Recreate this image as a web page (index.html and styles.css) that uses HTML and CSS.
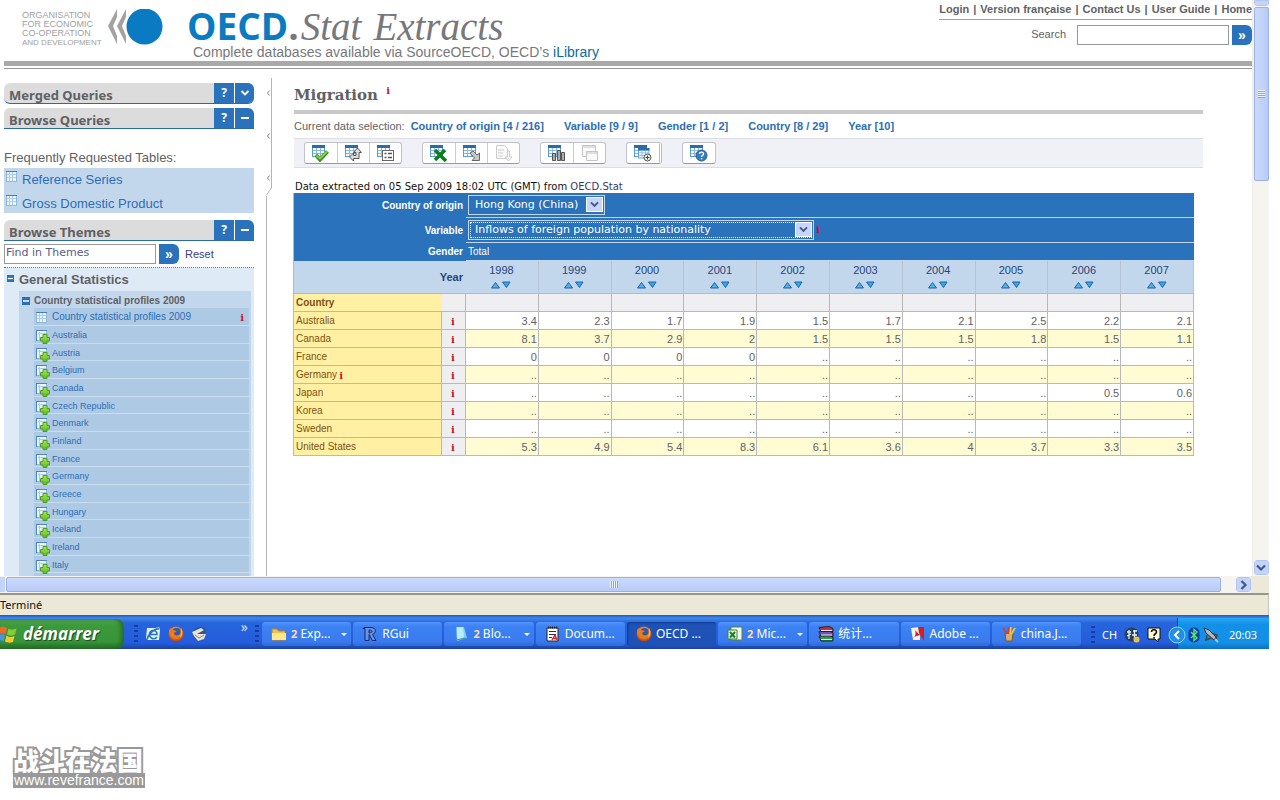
FILE: index.html
```html
<!DOCTYPE html>
<html lang="en">
<head>
<meta charset="utf-8">
<title>OECD.Stat Extracts - Migration</title>
<link rel="stylesheet" href="styles.css">
</head>
<body>
<svg class="defs" aria-hidden="true">
  <defs>
    <linearGradient id="gGreen" x1="0" y1="0" x2="0" y2="1"><stop offset="0" stop-color="#a6e84a"/><stop offset="1" stop-color="#5fb92c"/></linearGradient>
    <radialGradient id="gFox" cx=".5" cy=".4" r=".6"><stop offset="0" stop-color="#ffd24a"/><stop offset=".6" stop-color="#f07c1c"/><stop offset="1" stop-color="#b63c10"/></radialGradient>
    <symbol id="grid" viewBox="0 0 12 12"><rect x=".5" y=".5" width="10" height="10" fill="#e9f4fc" stroke="#8fb6dc"/><path d="M1 3.5h9M1 6.5h9M3.5 1v9M6.5 1v9" stroke="#a9cdea"/><path d="M0 .5h11" stroke="#3f7fbf"/></symbol>
    <symbol id="add" viewBox="0 0 14 14"><rect x=".5" y=".5" width="10" height="10" fill="#e9f4fc" stroke="#8fb6dc"/><path d="M0 .5h11M.5 0v11" stroke="#4a86c2"/><path d="M2 3.500h8M3.500 2v8" stroke="#a9cdea"/><path d="M7 4.500h4v3h2.500v3.500H11v2.500H7V11H4.500V7.500H7z" fill="url(#gGreen)" stroke="#4c9c28"/></symbol>
    <symbol id="minus" viewBox="0 0 8 8"><rect width="8" height="8" fill="#2a72b5"/><path d="M1 4h6" stroke="#fff" stroke-width="1.500"/></symbol>
    <symbol id="sort" viewBox="0 0 20 8"><path d="M4.500 1.500L8.500 7H.5z" fill="#4ab4f0" stroke="#2a5f98"/><path d="M11.500 1h7.500l-3.500 5.500z" fill="#39a6ea" stroke="#1766b4"/></symbol>
    <symbol id="sheet" viewBox="0 0 16 16"><rect x=".5" y=".5" width="12" height="11" fill="#f5fafe" stroke="#5c9bd0"/><path d="M0 1.500h13" stroke="#2a6ca8" stroke-width="3"/><path d="M1 5.500h11M1 8.500h11M4.500 3v8M8.500 3v8" stroke="#8cb8de"/></symbol>
    <symbol id="down" viewBox="0 0 10 8"><path d="M1 1.500l4 4 4-4" fill="none" stroke="#42578c" stroke-width="2.200"/></symbol>
    <symbol id="firefox" viewBox="0 0 16 16"><circle cx="8" cy="8" r="7.500" fill="url(#gFox)"/><circle cx="8.500" cy="6" r="4" fill="#2e5aa6"/><path d="M1 4l2-2 2 2 4 1-3 2 1 2c2 1 4 0 5-1 0 3-3 4-5 4-4 0-6-4-6-8z" fill="#ee7a1c"/><path d="M13 2c2 3 2 8-1 10l1-5z" fill="#ffb52e"/></symbol>
  </defs>
</svg>

<div class="screen">
  <div class="viewport">
    <div class="page">
      <header class="masthead">
        <div class="org">
          <p>ORGANISATION<br>FOR ECONOMIC<br>CO-OPERATION</p>
          <p class="org-last">AND DEVELOPMENT</p>
        </div>
        <svg class="globe" width="56" height="36" viewBox="0 0 56 36"><path d="M9 0L0 17l9 18V27L5 17l4-9zM18 0L9 17l9 18V27l-4-10 4-9z" fill="#a2a2a2"/><circle cx="36.500" cy="17.500" r="18" fill="#0a7bc2"/></svg>
        <div class="brand">
          <div class="wordmark"><span class="oecd">OECD</span><span class="dot">.</span><span class="stat">Stat</span><span class="extracts">Extracts</span></div>
          <div class="tagline">Complete databases available via SourceOECD, OECD’s <a href="#">iLibrary</a></div>
        </div>
        <div class="tools">
          <nav class="topnav"><a href="#">Login</a><span>|</span><a href="#">Version française</a><span>|</span><a href="#">Contact Us</a><span>|</span><a href="#">User Guide</a><span>|</span><a href="#">Home</a></nav>
          <form class="search"><label for="q">Search</label><input id="q" type="text"><button type="button" class="go">»</button></form>
        </div>
      </header>

      <div class="columns">
        <aside class="sidebar">
          <section class="bar round-bottom"><h2>Merged Queries</h2><button type="button">?</button><button type="button" aria-label="Expand"><svg width="10" height="8" viewBox="0 0 10 8"><path d="M1.500 2l3.500 3.500L8.500 2" fill="none" stroke="#fff" stroke-width="1.800"/></svg></button></section>
          <section class="bar"><h2>Browse Queries</h2><button type="button">?</button><button type="button" aria-label="Collapse"><svg width="8" height="8" viewBox="0 0 8 8"><path d="M0 4h8" stroke="#fff" stroke-width="2"/></svg></button></section>
          <p class="frequent">Frequently Requested Tables:</p>
          <ul class="requested">
            <li><svg width="12" height="12"><use href="#grid"/></svg><a href="#">Reference Series</a></li>
            <li><svg width="12" height="12"><use href="#grid"/></svg><a href="#">Gross Domestic Product</a></li>
          </ul>
          <section class="bar"><h2>Browse Themes</h2><button type="button">?</button><button type="button" aria-label="Collapse"><svg width="8" height="8" viewBox="0 0 8 8"><path d="M0 4h8" stroke="#fff" stroke-width="2"/></svg></button></section>
          <form class="find"><input type="text" value="Find in Themes" aria-label="Find in Themes"><button type="button" class="go">»</button><a href="#">Reset</a></form>
          <div class="tree">
            <h3><svg width="7" height="7"><use href="#minus"/></svg>General Statistics</h3>
            <div class="branch">
              <h4><svg width="8" height="8"><use href="#minus"/></svg>Country statistical profiles 2009</h4>
              <ul class="leaves">
                <li class="lead"><svg width="12" height="12"><use href="#grid"/></svg><a href="#">Country statistical profiles 2009</a><b class="info">i</b></li>
                <li><svg width="14" height="14"><use href="#add"/></svg><a href="#">Australia</a></li>
                <li><svg width="14" height="14"><use href="#add"/></svg><a href="#">Austria</a></li>
                <li><svg width="14" height="14"><use href="#add"/></svg><a href="#">Belgium</a></li>
                <li><svg width="14" height="14"><use href="#add"/></svg><a href="#">Canada</a></li>
                <li><svg width="14" height="14"><use href="#add"/></svg><a href="#">Czech Republic</a></li>
                <li><svg width="14" height="14"><use href="#add"/></svg><a href="#">Denmark</a></li>
                <li><svg width="14" height="14"><use href="#add"/></svg><a href="#">Finland</a></li>
                <li><svg width="14" height="14"><use href="#add"/></svg><a href="#">France</a></li>
                <li><svg width="14" height="14"><use href="#add"/></svg><a href="#">Germany</a></li>
                <li><svg width="14" height="14"><use href="#add"/></svg><a href="#">Greece</a></li>
                <li><svg width="14" height="14"><use href="#add"/></svg><a href="#">Hungary</a></li>
                <li><svg width="14" height="14"><use href="#add"/></svg><a href="#">Iceland</a></li>
                <li><svg width="14" height="14"><use href="#add"/></svg><a href="#">Ireland</a></li>
                <li><svg width="14" height="14"><use href="#add"/></svg><a href="#">Italy</a></li>
                <li></li>
              </ul>
            </div>
          </div>
        </aside>

        <div class="splitter">
          <svg width="6" height="118" viewBox="0 0 6 118"><path d="M5.500 0v110L.5 117" fill="none" stroke="#b4b4b4"/><path d="M3.500 12.500L1.500 15l2 2.500M3.500 55.500L1.500 58l2 2.500M3.500 97.500L1.500 100l2 2.500" fill="none" stroke="#888"/></svg>
        </div>

        <main class="content">
          <h1>Migration <b class="info">i</b></h1>
          <div class="selection"><span>Current data selection:</span><a href="#">Country of origin [4 / 216]</a><a href="#">Variable [9 / 9]</a><a href="#">Gender [1 / 2]</a><a href="#">Country [8 / 29]</a><a href="#">Year [10]</a></div>
          <div class="toolbar">
            <div class="group">
              <button type="button" aria-label="Select"><svg width="18" height="17" viewBox="0 0 18 17"><use href="#sheet" width="16" height="16"/><path d="M4 10l4 4.500 7.500-8" fill="none" stroke="#3c8a22" stroke-width="4"/><path d="M4.500 10.500l3.500 3 7-7" fill="none" stroke="#8ad04e" stroke-width="2"/></svg></button>
              <button type="button" aria-label="Layout"><svg width="18" height="17" viewBox="0 0 18 17"><use href="#sheet" width="16" height="16"/><path d="M12.500 3l4 4.500h-2.500v6H8.500v2.500l-4-4 4-4v2.500h2.500v-3H8.500z" fill="#ddd" stroke="#555"/></svg></button>
              <button type="button" aria-label="Options"><svg width="18" height="17" viewBox="0 0 18 17"><use href="#sheet" width="16" height="16"/><rect x="5.500" y="5.500" width="11" height="10" fill="#fff" stroke="#666"/><path d="M7.500 8.500h2m1.500 0h4M7.500 12.500h2m1.500 0h4" stroke="#555" stroke-width="1.500"/></svg></button>
            </div>
            <div class="group">
              <button type="button" aria-label="Excel"><svg width="18" height="17" viewBox="0 0 18 17"><use href="#sheet" width="16" height="16"/><path d="M5 5l11 11M15 5L5 15" stroke="#0c7d1c" stroke-width="3.500"/></svg></button>
              <button type="button" aria-label="Export"><svg width="18" height="17" viewBox="0 0 18 17"><use href="#sheet" width="16" height="16"/><path d="M7 8l3-2 4 4 2.500-2v7.500H9l2.500-2.500z" fill="#c8c8c8" stroke="#666"/></svg></button>
              <button type="button" aria-label="Download" disabled><svg width="18" height="17" viewBox="0 0 18 17" fill="#fafafa" stroke="#ccc"><path d="M1.500.5h8l3 3v10h-11zM3 5h6M3 8h5M3 11h5"/><path d="M12.500 6h2v6h2.500l-3.500 4-3.500-4h2.500z"/></svg></button>
            </div>
            <div class="group">
              <button type="button" aria-label="Chart"><svg width="18" height="17" viewBox="0 0 18 17"><use href="#sheet" width="16" height="16"/><path d="M4.500 8.500h3v7h-3zM9.500 5.500h3v10h-3zM13.500 7.500h3v8h-3z" fill="#aaa" stroke="#555"/></svg></button>
              <button type="button" aria-label="Windows" disabled><svg width="18" height="17" viewBox="0 0 18 17" fill="#fafafa" stroke="#c4c4c4"><path d="M1.500.5h13v11h-13zM1 2h14"/><path d="M5.500 6.500h11v9h-11zM5 8h12"/></svg></button>
            </div>
            <div class="group doubled">
              <button type="button" aria-label="Add query"><svg width="18" height="17" viewBox="0 0 18 17"><use href="#sheet" width="16" height="16"/><use href="#sheet" x="4" y="3" width="14" height="14"/><circle cx="13.500" cy="12.500" r="3.500" fill="#eee" stroke="#555"/><path d="M11.500 12.500h4M13.500 10.500v4" stroke="#444"/></svg></button>
            </div>
            <div class="group">
              <button type="button" aria-label="Help"><svg width="18" height="17" viewBox="0 0 18 17"><use href="#sheet" width="16" height="16"/><circle cx="11.500" cy="10.500" r="5.500" fill="#2f7fc4" stroke="#35597c"/><path d="M9.500 9c0-2.500 4-2.500 4 0 0 1.500-2 1.200-2 3" fill="none" stroke="#fff" stroke-width="1.300"/><circle cx="11.500" cy="13.800" r=".8" fill="#fff"/></svg></button>
            </div>
          </div>
          <p class="extracted">Data extracted on 05 Sep 2009 18:02 UTC (GMT) from <a href="#">OECD.Stat</a></p>

          <table class="data">
            <colgroup><col class="c-name"><col class="c-info"><col span="10"></colgroup>
            <thead>
              <tr class="dim tall"><th colspan="2"><label for="origin">Country of origin</label></th><td colspan="10"><span class="pick short"><select id="origin"><option>Hong Kong (China)</option></select><svg width="10" height="8"><use href="#down"/></svg></span></td></tr>
              <tr class="dim tall"><th colspan="2"><label for="variable">Variable</label></th><td colspan="10"><span class="pick long"><select id="variable"><option>Inflows of foreign population by nationality</option></select><svg width="10" height="8"><use href="#down"/></svg></span><b class="info dark">i</b></td></tr>
              <tr class="dim"><th colspan="2">Gender</th><td colspan="10">Total</td></tr>
              <tr class="years"><th colspan="2" class="ylabel">Year</th>
                <th>1998<svg width="20" height="8"><use href="#sort"/></svg></th><th>1999<svg width="20" height="8"><use href="#sort"/></svg></th><th>2000<svg width="20" height="8"><use href="#sort"/></svg></th><th>2001<svg width="20" height="8"><use href="#sort"/></svg></th><th>2002<svg width="20" height="8"><use href="#sort"/></svg></th><th>2003<svg width="20" height="8"><use href="#sort"/></svg></th><th>2004<svg width="20" height="8"><use href="#sort"/></svg></th><th>2005<svg width="20" height="8"><use href="#sort"/></svg></th><th>2006<svg width="20" height="8"><use href="#sort"/></svg></th><th>2007<svg width="20" height="8"><use href="#sort"/></svg></th></tr>
            </thead>
            <tbody>
              <tr class="head"><th colspan="2"><span>Country</span></th><td></td><td></td><td></td><td></td><td></td><td></td><td></td><td></td><td></td><td></td></tr>
              <tr><th>Australia</th><td><b class="info">i</b></td><td>3.4</td><td>2.3</td><td>1.7</td><td>1.9</td><td>1.5</td><td>1.7</td><td>2.1</td><td>2.5</td><td>2.2</td><td>2.1</td></tr>
              <tr><th>Canada</th><td><b class="info">i</b></td><td>8.1</td><td>3.7</td><td>2.9</td><td>2</td><td>1.5</td><td>1.5</td><td>1.5</td><td>1.8</td><td>1.5</td><td>1.1</td></tr>
              <tr><th>France</th><td><b class="info">i</b></td><td>0</td><td>0</td><td>0</td><td>0</td><td>..</td><td>..</td><td>..</td><td>..</td><td>..</td><td>..</td></tr>
              <tr><th>Germany<b class="info">i</b></th><td><b class="info">i</b></td><td>..</td><td>..</td><td>..</td><td>..</td><td>..</td><td>..</td><td>..</td><td>..</td><td>..</td><td>..</td></tr>
              <tr><th>Japan</th><td><b class="info">i</b></td><td>..</td><td>..</td><td>..</td><td>..</td><td>..</td><td>..</td><td>..</td><td>..</td><td>0.5</td><td>0.6</td></tr>
              <tr><th>Korea</th><td><b class="info">i</b></td><td>..</td><td>..</td><td>..</td><td>..</td><td>..</td><td>..</td><td>..</td><td>..</td><td>..</td><td>..</td></tr>
              <tr><th>Sweden</th><td><b class="info">i</b></td><td>..</td><td>..</td><td>..</td><td>..</td><td>..</td><td>..</td><td>..</td><td>..</td><td>..</td><td>..</td></tr>
              <tr><th>United States</th><td><b class="info">i</b></td><td>5.3</td><td>4.9</td><td>5.4</td><td>8.3</td><td>6.1</td><td>3.6</td><td>4</td><td>3.7</td><td>3.3</td><td>3.5</td></tr>
            </tbody>
          </table>
        </main>
      </div>
    </div>
    <div class="vscroll">
      <div class="arrow stub"></div>
      <div class="vthumb"><i class="grip"></i></div>
      <div class="arrow"><svg width="10" height="8"><use href="#down"/></svg></div>
    </div>
  </div>

  <div class="hscroll">
    <div class="stub"></div>
    <div class="hthumb"><i class="grip"></i></div>
    <div class="arrow"><svg width="8" height="10" viewBox="0 0 8 10"><path d="M1.500 1l4 4-4 4" fill="none" stroke="#42578c" stroke-width="2.200"/></svg></div>
    <div class="corner"></div>
  </div>
  <div class="status"><span>Terminé</span></div>

  <footer class="taskbar">
    <button type="button" class="start"><svg width="18" height="18" viewBox="0 0 18 18"><path d="M-1 3c3-2 5-1 8 0L5.500 9c-3-1-5-1-8 1z" fill="#ee6a2c"/><path d="M8.500 3.500c3 2 5 1 8 0L15 9.500c-3 1.500-5 1.500-8 0z" fill="#86cc3a"/><path d="M-2 11c3-2 4-2 7-1L3.500 16C1 15 0 15-3 16z" fill="#4e90ea"/><path d="M6.500 10.500c3 2 5 2 8 .5L13 17c-3 1-5 1-8-.5z" fill="#fac62c"/></svg>démarrer</button>
    <div class="quick">
      <i class="dots"></i>
      <svg width="16" height="16" viewBox="0 0 16 16"><path d="M2 2h9l3-1 1 3-1 10H3L1 12z" fill="#e4f2fc"/><path d="M12 11c-2 3-7 2-7.500-2S9 3 11 5.500c1 1 1 2 1 3H4.500M3 13c-2-2 6-11 11-10" fill="none" stroke="#2677b8" stroke-width="1.600"/></svg>
      <svg width="16" height="16"><use href="#firefox"/></svg>
      <svg width="16" height="16" viewBox="0 0 16 16"><path d="M1 7c1-6 10-8 14-4l-2 10-7 2z" fill="#2f568c"/><path d="M1 6l9-4 3 2-7 4h9l-2 5-6 2-4-5z" fill="#e6e2dc"/><path d="M4 9l4 3 5-3" stroke="#a88450" fill="none"/></svg>
      <span class="more">»</span>
      <i class="dots"></i>
    </div>
    <div class="tasks">
      <button type="button"><svg width="16" height="16" viewBox="0 0 16 16"><path d="M1 3h5l1.500 2H14v9H1z" fill="#f0c050" stroke="#b98a20"/><path d="M1 7h14v7H1z" fill="#ffe68a"/></svg><span><b>2</b> Exp...</span><i class="caret"></i></button>
      <button type="button"><svg width="16" height="16" viewBox="0 0 16 16"><path d="M2 1.500h7c6 0 5 6 1.500 7l3.500 6h-3.500l-3.500-6v6H3v-12H1zM7 4v3c4 0 4-3 0-3z" fill="#6b93df" stroke="#12286c"/></svg><span>RGui</span></button>
      <button type="button"><svg width="16" height="16" viewBox="0 0 16 16"><path d="M3 1h8l3 11-10 3z" fill="#7ed0ea"/><path d="M3 1h7l1 10-7 3z" fill="#b8ecf8"/><path d="M3 1v13l10-2" fill="none" stroke="#438ec0"/></svg><span><b>2</b> Blo...</span><i class="caret"></i></button>
      <button type="button"><svg width="16" height="16" viewBox="0 0 16 16"><path d="M2 2h11v13H2z" fill="#fff" stroke="#222"/><path d="M4 5.500h7M4 8.500h7M4 11.500h3" stroke="#235"/><path d="M3 1.500h9" stroke="#222" stroke-width="2" stroke-dasharray="1 1"/><path d="M7 14l3-5 2 5M8 12.500h3" fill="none" stroke="#d02020" stroke-width="1.300"/></svg><span>Docum...</span></button>
      <button type="button" class="active"><svg width="16" height="16"><use href="#firefox"/></svg><span>OECD ...</span></button>
      <button type="button"><svg width="16" height="16" viewBox="0 0 16 16"><path d="M4 1h11v13H4z" fill="#f2f8ee" stroke="#4a8a3a"/><path d="M1 4h9v9H1z" fill="#e5f2df" stroke="#3a8a32"/><path d="M3 6l5 5.500M8 6l-5 5.500" stroke="#1f7f24" stroke-width="2"/></svg><span><b>2</b> Mic...</span><i class="caret"></i></button>
      <button type="button"><svg width="16" height="16" viewBox="0 0 16 16"><path d="M1 1.500l10-1 4 2v3H3z" fill="#c83040" stroke="#222"/><path d="M1 5.500h11l3 1v4H3z" fill="#7b4cc0" stroke="#222"/><path d="M1 10h11l3 1v4H3z" fill="#2d9b50" stroke="#222"/><path d="M3 4.500h11M3 9h11M3 13.500h11" stroke="#eee"/></svg><span>统计...</span></button>
      <button type="button"><svg width="16" height="16" viewBox="0 0 16 16"><path d="M1 2l9-1v13H3z" fill="#f6f2ee"/><path d="M8 1h6v14l-5-8z" fill="#d81c1c"/><path d="M2 13c4-2 4-6 3-9 3 4 5 5 7 5-4 0-7 1-10 4z" fill="#d81c1c"/></svg><span>Adobe ...</span></button>
      <button type="button"><svg width="16" height="16" viewBox="0 0 16 16"><path d="M4 7h8l-1 8H5z" fill="#d6b070" stroke="#7a5a2c"/><path d="M6 8L2 2M7.500 8V1" stroke="#cf4030" stroke-width="1.800"/><path d="M9 8l1-7M10.500 8L14 2" stroke="#e8c840" stroke-width="1.800"/></svg><span>china.J...</span></button>
    </div>
    <div class="lang">
      <i class="dots"></i><span>CH</span>
      <svg width="16" height="16" viewBox="0 0 16 16"><circle cx="7.500" cy="7.500" r="7" fill="#24405e"/><path d="M3 5h4M5 3v9M3 9l4-2M9 4h4M8 8h5M10.500 3v9" stroke="#e6eef6" stroke-width="1.300"/><circle cx="12.500" cy="12.500" r="3" fill="#e9c04a"/></svg>
      <svg width="14" height="16" viewBox="0 0 14 16"><path d="M1 1h12v11h-2v3l-3-3H1z" fill="#fffbd8" stroke="#111"/><path d="M4.500 5c0-3 5-3 5 0 0 2-2.500 1.500-2.500 4M7 10v1.500" fill="none" stroke="#111" stroke-width="1.600"/></svg>
    </div>
    <div class="tray">
      <svg class="chev" width="18" height="18" viewBox="0 0 18 18"><circle cx="9" cy="9" r="8" fill="#2190e2" stroke="#8cd4fa"/><path d="M11 5L7 9l4 4" fill="none" stroke="#fff" stroke-width="2"/></svg>
      <svg width="12" height="16" viewBox="0 0 12 16"><rect x=".5" y=".5" width="11" height="15" rx="5" fill="#1238b4"/><path d="M3 5l6 6-3 2.500v-11L9 5l-6 6" fill="none" stroke="#4df05c" stroke-width="1.400"/></svg>
      <svg width="16" height="16" viewBox="0 0 16 16"><path d="M1 1l5 2 7 7-2 3-8-7z" fill="#b8b8b8" stroke="#333"/><path d="M4 8l-1 5 5-2M10 7l4 1-1 4" fill="none" stroke="#444" stroke-width="1.500"/><path d="M12 12l3 3" stroke="#7fd2f4" stroke-width="2"/></svg>
      <time>20:03</time>
    </div>
  </footer>
</div>
<div class="watermark"><span class="wm-name">战斗在法国</span><span class="wm-url">www.revefrance.com</span></div>
</body>
</html>
```
FILE: styles.css
```css
* { box-sizing: border-box; }
body { margin: 0; background: #fff; font: 11px/14px "Liberation Sans", Arial, "Noto Sans CJK SC", sans-serif; color: #5f6165; }
h1, h2, h3, h4, p, ul { margin: 0; padding: 0; }
ul { list-style: none; }
a { color: #2a6eb8; text-decoration: none; }
button, input, select { font: inherit; color: inherit; border: 0; padding: 0; margin: 0; border-radius: 0; background: none; }
svg { display: block; flex: none; overflow: hidden; }
.defs { position: absolute; width: 0; height: 0; }
.info { font: bold 10px/12px "DejaVu Serif", serif; color: #c4161c; }

.screen { margin-right: 11px; }
.viewport { display: flex; height: 72vh; overflow: hidden; }
.page { flex: 1; min-width: 0; display: flex; flex-direction: column; padding-left: 4px; }

/* Masthead */
.masthead { display: flex; height: 69px; flex: none; padding-left: 18px; border-bottom: 1px solid #999; position: relative; }
.masthead::after { content: ""; position: absolute; left: 0; right: 0; bottom: 2px; height: 5px; background: #a9a9a9; }
.org { width: 86px; padding-top: 11px; font-size: 9px; line-height: 9px; color: #a0a0a0; white-space: nowrap; }
.org-last { font-size: 8px; }
.globe { margin-top: 9px; }
.brand { margin-left: 23px; }
.wordmark { display: flex; align-items: baseline; height: 44px; padding-top: 8px; color: #77787b; }
.oecd, .dot { font: bold 37px/36px "Open Sans", sans-serif; }
.oecd { color: #0a7bc2; }
.stat, .extracts { font: italic 39px/36px "Liberation Serif", serif; }
.stat { margin-left: 2px; }
.extracts { margin-left: 12px; }
.tagline { margin-left: 6px; font-size: 14px; line-height: 17px; color: #77787b; white-space: nowrap; }
.tagline a { color: #0a6aa6; }
.tools { margin-left: auto; display: flex; flex-direction: column; align-items: flex-end; }
.topnav { display: flex; gap: 4px; height: 20px; padding-top: 2px; border-bottom: 1px solid #a0a0a0; font-weight: bold; white-space: nowrap; }
.topnav a { color: inherit; }
.search { display: flex; margin-top: 5px; }
.search label { line-height: 19px; margin-right: 11px; }
.search input { width: 152px; height: 20px; border: 1px solid #999; background: #fff; }
.go { width: 20px; height: 20px; background: #2a72bb; color: #fff; font: bold 14px/16px "Liberation Sans", sans-serif; border-radius: 0 6px 6px 0; }
.search .go { margin-left: 3px; }

.columns { display: flex; flex: 1; min-height: 0; }

/* Sidebar */
.sidebar { width: 250px; flex: none; padding-top: 14px; }
.bar { display: flex; height: 21px; margin-bottom: 4px; border-bottom: 1px solid #2a6aa8; background: #dcdcdc; border-radius: 6px 6px 0 0; overflow: hidden; }
.round-bottom { border-radius: 6px; }
.bar h2 { flex: 1; padding-left: 5px; font: bold 13px/24px "Noto Sans", sans-serif; color: #5f6165; }
.bar button { width: 20px; background: #2a72bb; color: #fff; font: bold 12px/20px "Noto Sans", sans-serif; display: flex; align-items: center; justify-content: center; }
.bar button + button { border-left: 1px solid #fff; }
.frequent { margin-top: 20px; font-size: 13px; line-height: 18px; padding-bottom: 1px; }
.requested { background: #c3d7ec; margin-bottom: 7px; }
.requested li { display: flex; height: 24px; padding: 3px 0 0 2px; }
.requested li + li { height: 21px; }
.requested a { margin-left: 4px; font-size: 13px; line-height: 18px; }
.sidebar .find { display: flex; margin-top: -1px; padding-bottom: 3px; border-bottom: 1px dotted #4a7fb5; }
.find input { width: 152px; height: 20px; border: 1px solid #999; padding: 0 1px 3px; font: 11px/14px "DejaVu Sans", sans-serif; color: #5a5a8a; }
.find .go { margin-left: 3px; }
.find a { margin-left: 6px; line-height: 20px; color: #3a3a8a; }
.tree { background: #deeaf5; padding: 0 3px 0 15px; }
.tree h3 { display: flex; gap: 5px; height: 23px; margin-left: -12px; font-size: 13px; line-height: 24px; }
.tree h3 svg { margin-top: 7px; }
.branch { background: #c3d7ec; padding: 1px 2px 0 3px; }
.tree h4 { display: flex; gap: 4px; height: 16px; font-size: 10px; line-height: 17px; }
.tree h4 svg { margin-top: 5px; }
.leaves { margin-left: 12px; background: #aec9e4; }
.leaves li { display: flex; height: 18px; padding: 1px 5px 0 2px; border-bottom: 1px solid #c9dcf0; font-size: 9px; line-height: 16px; }
.leaves li:nth-child(3n + 3) { height: 17px; }
.leaves svg { margin-top: 3px; }
.leaves a { margin-left: 2px; }
.leaves .lead { font-size: 10px; }
.leaves .lead a { margin-left: 4px; }
.lead .info { margin: 3px 0 0 auto; }

.splitter { width: 6px; margin: 9px 0 0 12px; display: flex; flex-direction: column; flex: none; }
.splitter::after { content: ""; flex: 1; border-left: 1px solid #b4b4b4; }

/* Main content */
.content { flex: 1; min-width: 0; padding: 15px 49px 0 21px; }
h1 { height: 30px; margin-left: 1px; border-bottom: 4px solid #c8c8c8; font: bold 15px/22px "DejaVu Serif", serif; }
h1 .info { margin-left: 3px; vertical-align: 6px; }
.selection { display: flex; margin: 5px 0 5px 1px; white-space: nowrap; }
.selection a { font-weight: bold; margin-left: 20px; }
.selection span + a { margin-left: 6px; }
.toolbar { display: flex; gap: 20px; height: 30px; margin-left: 1px; padding: 3px 10px; background: #f0f1f6; border: solid #dedfe4; border-width: 1px 0; }
.group { display: flex; height: 22px; border: 1px solid #c2c3c8; border-bottom-color: #999; border-radius: 3px; background: #fff; }
.group button { width: 32px; display: flex; align-items: center; justify-content: center; }
.group button + button { border-left: 1px solid #ccc; }
.doubled { border-right: 3px double #bbb; }
.extracted { margin: 12px 0 0 2px; font: 10px/13px "DejaVu Sans", sans-serif; color: #111; white-space: nowrap; }
.extracted a { color: #3a3a6a; }

.data { width: calc(100% - 9px); table-layout: fixed; border-collapse: separate; border-spacing: 0; border: solid #b9b9b9; border-width: 0 0 0 1px; }
.c-name { width: 148px; }
.c-info { width: 24px; }
.data th, .data td { padding: 0 1px 0 0; height: 18px; line-height: 14px; text-align: right; white-space: nowrap; border: solid #b9b9b9; border-width: 0 1px 1px 0; }
.data .dim th, .data .dim td { background: #2a72bb; color: #fff; font-size: 10px; border: 0; padding: 0 3px 0 2px; }
.data .dim td { text-align: left; border-bottom: 1px solid #c3d7ec; }
.data .tall th, .data .tall td { height: 25px; }
.pick { display: inline-block; position: relative; vertical-align: middle; border: 1px solid #c3d7ec; height: 20px; }
.pick select { appearance: none; width: 100%; height: 18px; padding-left: 6px; font: 11px/16px "DejaVu Sans", sans-serif; color: #fff; display: block; }
.pick svg { position: absolute; right: 1px; top: 1px; width: 17px; height: 15px; padding: 3px; background: #c6d5f8; border: 1px solid #fff; }
.short { width: 137px; }
.long { width: 346px; }
.long select { outline: 1px dotted #fff; outline-offset: -2px; }
.dark { color: #b01850; margin-left: 2px; }
.data .years th { height: 33px; background: #c3d7ec; color: #23457c; font-weight: normal; text-align: center; line-height: 15px; border-right-color: #b5c3d2; }
.years svg { margin: 3px auto 2px; }
.data .years .ylabel { text-align: right; font-weight: bold; padding-right: 3px; border-right: 0; }
.data .head th { background: linear-gradient(90deg, #fff0a4 148px, #efefef 148px); text-align: left; }
.data .head td { background: #efefef; }
.data tbody th { background: #fff0a4; color: #84500c; font-size: 10px; font-weight: normal; text-align: left; padding-left: 2px; }
.data tbody .head th { font-weight: bold; }
.data tbody tr:nth-child(odd) td { background: #fffbd2; }
.data tbody tr.head td, .data tbody td:nth-child(2), .data tbody tr:nth-child(odd) td:nth-child(2) { background: #efeff2; }
.data tbody tr:not(.head) td:nth-child(2) { text-align: center; }
.data tbody tr:not(.head) td:nth-child(2) .info { vertical-align: -1px; }
.data th .info { margin-left: 2px; vertical-align: -1px; }

/* Scrollbars */
.vscroll { width: 17px; display: flex; flex-direction: column; align-items: center; background: #f5f4ee; border-left: 1px solid #eeede5; }
.arrow { width: 15px; height: 15px; display: flex; align-items: center; justify-content: center; background: #c3d3fb; border: 1px solid #fff; border-radius: 3px; outline: 1px solid #b2c5f0; outline-offset: -1px; flex: none; }
.vscroll .arrow:last-child { margin: auto 0 1px; }
.vscroll .stub { height: 6px; border-radius: 0 0 3px 3px; }
.vthumb { width: 15px; height: 174px; display: flex; align-items: center; justify-content: center; margin-top: 1px; border: 1px solid #98b0e4; border-radius: 2px; background: linear-gradient(90deg, #cbdafd, #b8cbf8); }
.vthumb .grip { width: 7px; height: 8px; background: repeating-linear-gradient(#eef4fe 0 1px, #8ca4dc 1px 2px); }
.hscroll { display: flex; height: 17px; align-items: center; background: #f5f4ee; }
.hscroll .stub { width: 5px; height: 15px; background: #c3d3fb; }
.hthumb { flex: 1; height: 15px; display: flex; align-items: center; justify-content: center; margin: 0 15px 0 1px; border: 1px solid #98b0e4; border-radius: 2px; background: linear-gradient(#cbdafd, #b8cbf8); }
.hthumb .grip { width: 8px; height: 7px; background: repeating-linear-gradient(90deg, #eef4fe 0 1px, #8ca4dc 1px 2px); }
.corner { width: 18px; height: 17px; background: #ece9d8; }
.status { height: 22px; border-top: 2px solid #96968e; border-right: 1px solid #c8c5b4; background: #ebe8d7; color: #111; font: 11px/20px "Noto Sans", sans-serif; }

/* Taskbar */
.taskbar { display: flex; height: 34px; background: linear-gradient(#1f54c0 0, #3e88ea 3px, #2764dc 8px, #245ddb 28px, #1a42a2 34px); color: #fff; font: 12px/16px "Noto Sans", "Noto Sans CJK SC", sans-serif; }
.start { width: 124px; flex: none; display: flex; align-items: center; gap: 5px; margin-top: 4px; padding-bottom: 1px; border-radius: 0 8px 8px 0; background: linear-gradient(#5aa858, #3c9a3c 20%, #37953a 75%, #236c25); box-shadow: inset -3px 0 4px #246c26; font: italic bold 17px/20px "Open Sans", sans-serif; text-shadow: 1px 1px 1px #1c4a1c; }
.quick { width: 138px; flex: none; display: flex; align-items: center; gap: 7px; padding: 4px 3px 0 10px; }
.quick .more { margin: -14px 0 0 auto; font-size: 14px; color: #cfe0ff; }
.dots { width: 4px; height: 18px; background: repeating-linear-gradient(#163da4 0 2px, transparent 2px 5px); }
.tasks { flex: 1; min-width: 0; display: flex; gap: 2px; padding: 7px 0 3px; }
.tasks button { flex: 1; min-width: 0; display: flex; align-items: center; gap: 4px; padding: 0 4px 0 9px; border-radius: 3px; background: linear-gradient(#5591fb, #3c81f3 20%, #3a7bee 80%, #3068d8); white-space: nowrap; text-align: left; font-size: 12px; }
.tasks .active { background: #1e52b7; box-shadow: inset 1px 1px 2px #163c8c; }
.tasks b { font-size: 11px; color: #ffd8a0; }
.caret { margin-left: auto; border: solid transparent; border-width: 3px 3px 0; border-top-color: #fff; }
.lang { width: 96px; display: flex; align-items: center; gap: 7px; padding: 5px 0 0 10px; flex: none; font-size: 11px; }
.tray { width: 92px; flex: none; display: flex; align-items: center; padding: 2px 12px 0 0; margin-top: 3px; background: linear-gradient(#28a8f4, #1290e8 20%, #1490e6 80%, #0d6fc4); font-size: 11px; border-left: 1px solid #0f4aa0; }
.tray svg { margin-right: 3px; }
.tray .chev { margin: 0 2px 0 -10px; }
.tray time { margin-left: auto; }

.watermark { display: inline-flex; flex-direction: column; margin: 97px 0 0 13px; color: #fff; }
.wm-name { font: 900 26px/27px "Noto Sans CJK SC", sans-serif; -webkit-text-stroke: 4px #999; paint-order: stroke fill; }
.wm-url { padding: 0 1px; background: #999; font-size: 14px; line-height: 15px; position: relative; }
```
